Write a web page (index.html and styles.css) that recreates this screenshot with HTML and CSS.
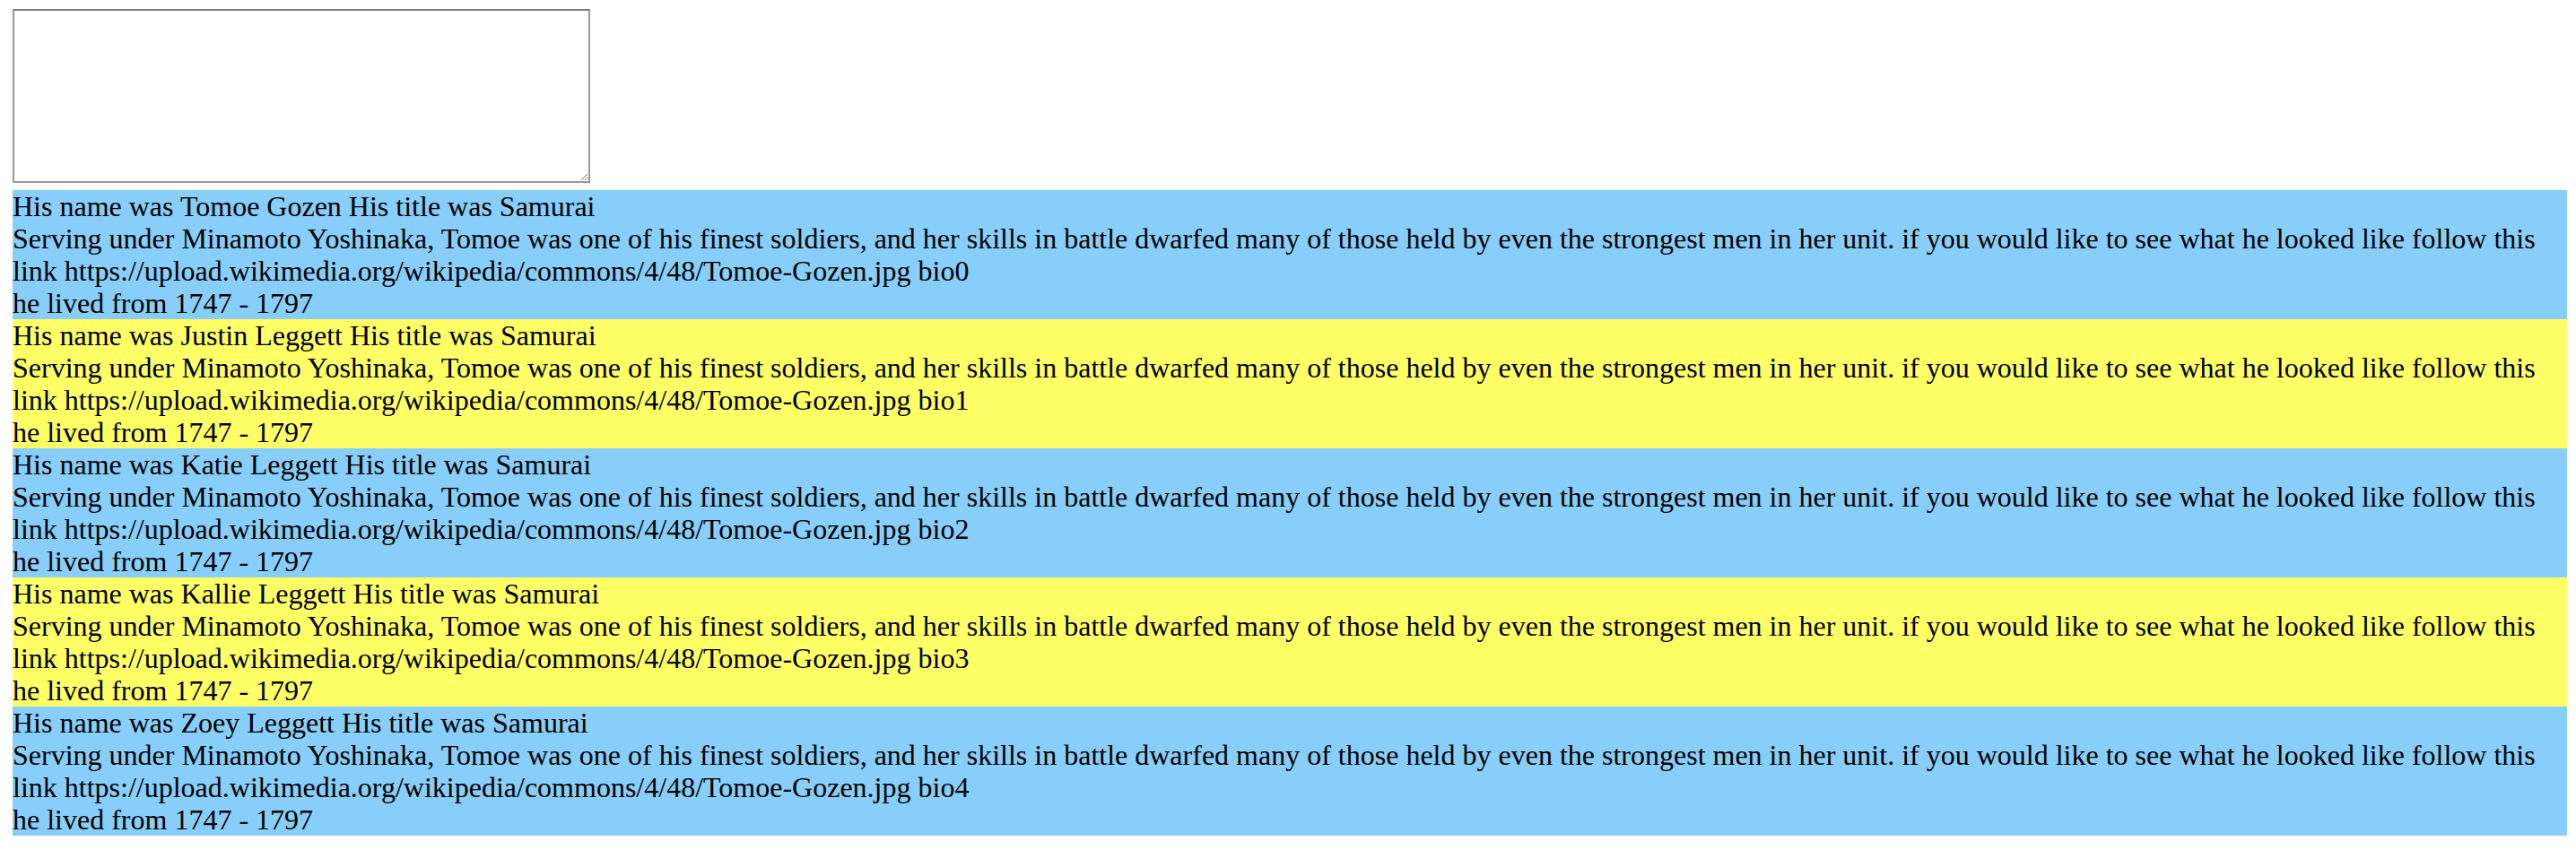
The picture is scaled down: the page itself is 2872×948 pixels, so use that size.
FILE: index.html
```html
<!DOCTYPE html>
<html>
<head>
<meta charset="utf-8">
<link rel="stylesheet" href="styles.css">
</head>
<body>
<textarea class="note"></textarea>
<div class="bio bio-blue">
  <div class="line">His name was Tomoe Gozen His title was Samurai</div>
  <div class="line">Serving under Minamoto Yoshinaka, Tomoe was one of his finest soldiers, and her skills in battle dwarfed many of those held by even the strongest men in her unit. if you would like to see what he looked like follow this link https://upload.wikimedia.org/wikipedia/commons/4/48/Tomoe-Gozen.jpg bio0</div>
  <div class="line">he lived from 1747 - 1797</div>
</div>
<div class="bio bio-yellow">
  <div class="line">His name was Justin Leggett His title was Samurai</div>
  <div class="line">Serving under Minamoto Yoshinaka, Tomoe was one of his finest soldiers, and her skills in battle dwarfed many of those held by even the strongest men in her unit. if you would like to see what he looked like follow this link https://upload.wikimedia.org/wikipedia/commons/4/48/Tomoe-Gozen.jpg bio1</div>
  <div class="line">he lived from 1747 - 1797</div>
</div>
<div class="bio bio-blue">
  <div class="line">His name was Katie Leggett His title was Samurai</div>
  <div class="line">Serving under Minamoto Yoshinaka, Tomoe was one of his finest soldiers, and her skills in battle dwarfed many of those held by even the strongest men in her unit. if you would like to see what he looked like follow this link https://upload.wikimedia.org/wikipedia/commons/4/48/Tomoe-Gozen.jpg bio2</div>
  <div class="line">he lived from 1747 - 1797</div>
</div>
<div class="bio bio-yellow">
  <div class="line">His name was Kallie Leggett His title was Samurai</div>
  <div class="line">Serving under Minamoto Yoshinaka, Tomoe was one of his finest soldiers, and her skills in battle dwarfed many of those held by even the strongest men in her unit. if you would like to see what he looked like follow this link https://upload.wikimedia.org/wikipedia/commons/4/48/Tomoe-Gozen.jpg bio3</div>
  <div class="line">he lived from 1747 - 1797</div>
</div>
<div class="bio bio-blue">
  <div class="line">His name was Zoey Leggett His title was Samurai</div>
  <div class="line">Serving under Minamoto Yoshinaka, Tomoe was one of his finest soldiers, and her skills in battle dwarfed many of those held by even the strongest men in her unit. if you would like to see what he looked like follow this link https://upload.wikimedia.org/wikipedia/commons/4/48/Tomoe-Gozen.jpg bio4</div>
  <div class="line">he lived from 1747 - 1797</div>
</div>
</body>
</html>
```
FILE: styles.css
```css
html, body {
  background: #ffffff;
}
body {
  margin: 10px 10px 0 14px;
  font-family: "Liberation Serif", "Times New Roman", serif;
  font-size: 32px;
  line-height: 36px;
  color: #000000;
}
.note {
  display: block;
  box-sizing: border-box;
  width: 644px;
  height: 194px;
  margin: 0 0 8px 0;
  padding: 4px;
  border-width: 2px;
  border-style: solid;
  border-color: #7a7a7a #9a9a9a #9a9a9a #9a9a9a;
  background: #ffffff;
  font-family: "Liberation Mono", monospace;
  font-size: 26px;
}
.bio {
  display: flex;
  flex-direction: column;
}
.bio-blue {
  background: #87cefa;
}
.bio-yellow {
  background: #ffff66;
}
.line {
  margin: 0;
}
```
